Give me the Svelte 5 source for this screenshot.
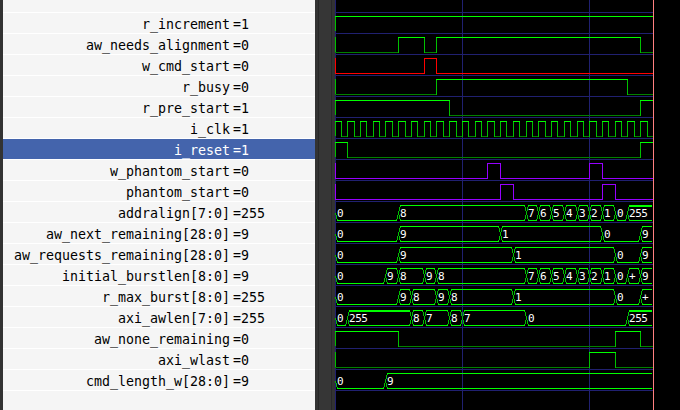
<script>
  const TICK = 12.738;
  const END = 25;
  const ROW = 21;
  const px = (t) => Math.floor(t * TICK);

  const clock = Array.from({ length: 50 }, (_, i) => [i / 2, i % 2 ? 0 : 1]);

  const signals = [
    { name: 'r_increment', value: '1', bits: [[0, 1]] },
    { name: 'aw_needs_alignment', value: '0', bits: [[0, 0], [5, 1], [7, 0], [8, 1], [24, 0]] },
    { name: 'w_cmd_start', value: '0', color: 'red', bits: [[0, 0], [7, 1], [8, 0]] },
    { name: 'r_busy', value: '0', bits: [[0, 0], [8, 1], [23, 0]] },
    { name: 'r_pre_start', value: '1', bits: [[0, 1], [9, 0], [24, 1]] },
    { name: 'i_clk', value: '1', bits: clock },
    { name: 'i_reset', value: '1', selected: true, bits: [[0, 1], [1, 0], [24, 1]] },
    { name: 'w_phantom_start', value: '0', color: 'violet', bits: [[0, 0], [12, 1], [13, 0], [20, 1], [21, 0]] },
    { name: 'phantom_start', value: '0', color: 'violet', bits: [[0, 0], [13, 1], [14, 0], [21, 1], [22, 0]] },
    { name: 'addralign[7:0]', value: '255', bus: [[0, '0'], [5, '8'], [15, '7'], [16, '6'], [17, '5'], [18, '4'], [19, '3'], [20, '2'], [21, '1'], [22, '0'], [23, '255']] },
    { name: 'aw_next_remaining[28:0]', value: '9', bus: [[0, '0'], [5, '9'], [13, '1'], [21, '0'], [24, '9']] },
    { name: 'aw_requests_remaining[28:0]', value: '9', bus: [[0, '0'], [5, '9'], [14, '1'], [22, '0'], [24, '9']] },
    { name: 'initial_burstlen[8:0]', value: '9', bus: [[0, '0'], [4, '9'], [5, '8'], [7, '9'], [8, '8'], [15, '7'], [16, '6'], [17, '5'], [18, '4'], [19, '3'], [20, '2'], [21, '1'], [22, '0'], [23, '+'], [24, '9']] },
    { name: 'r_max_burst[8:0]', value: '255', bus: [[0, '0'], [5, '9'], [6, '8'], [8, '9'], [9, '8'], [14, '1'], [22, '0'], [24, '+']] },
    { name: 'axi_awlen[7:0]', value: '255', bus: [[0, '0'], [1, '255'], [6, '8'], [7, '7'], [9, '8'], [10, '7'], [15, '0'], [23, '255']] },
    { name: 'aw_none_remaining', value: '0', bits: [[0, 1], [5, 0], [22, 1], [24, 0]] },
    { name: 'axi_wlast', value: '0', bits: [[0, 0], [20, 1], [22, 0]] },
    { name: 'cmd_length_w[28:0]', value: '9', bus: [[0, '0'], [4, '9']] }
  ];

  const box = (x, y, w, h) => `M${x} ${y}h${w}v${h}h${-w}z`;

  // One bit trace: high runs, low runs and the edges between them.
  function bitPaths(bits) {
    let high = '', low = '', edge = box(0, 4, 1, 15);
    bits.forEach(([t, v], i) => {
      const a = px(t);
      const b = px(bits[i + 1]?.[0] ?? END);
      if (i) edge += box(a, 4, 1, 16);
      if (v) high += box(a, 4, b - a + 1, 1);
      else low += box(a, 19, b - a + 1, 1);
    });
    return { high, low, edge };
  }

  // Stepped diagonal from the middle of the row to a corner.
  function slope(x, dir, up) {
    const steps = [[0, 2], [1, 4], [2, 2]];
    let d = '', n = 0;
    for (const [dx, h] of steps) {
      const y = up ? 12 - n - h : 12 + n;
      d += box(x + dir * dx, y, 1, h);
      n += h;
    }
    return d;
  }

  function busPaths(bus) {
    let line = '', edge = '';
    bus.forEach(([t, text], i) => {
      const a = px(t);
      const last = i === bus.length - 1;
      const b = px(last ? END : bus[i + 1][0]);
      const sides = text === '0' ? [false] : [true, false];
      for (const up of sides) {
        edge += slope(a, 1, up);
        if (!last) edge += slope(b, -1, up);
        const thick = up && text === '255' ? 2 : 1;
        line += box(a + 2, up ? 4 : 19, b - a - 3, thick);
      }
    });
    return { line, edge };
  }
</script>

<div class="viewer">
  <div class="names">
    <div class="head"></div>
    {#each signals as s}
      <div class="row" class:selected={s.selected}>
        <span class="name">{s.name}</span><span class="value">={s.value}</span>
      </div>
    {/each}
    <div class="tail"></div>
  </div>
  <div class="splitter"></div>
  <svg class="waves" width="345" height="410" viewBox="0 0 345 410">
    <g class="grid">
      {#each [0, 10, 20] as t}
        <rect x={px(t)} y="0" width="1" height="410" />
      {/each}
      {#each Array(signals.length + 1) as _, i}
        <rect x="0" y={12 + i * ROW} width={px(END)} height="1" />
      {/each}
    </g>
    {#each signals as s, i}
      <g class={s.color ?? 'green'} transform={`translate(0 ${12 + i * ROW})`}>
        {#if s.bits}
          {@const p = bitPaths(s.bits)}
          <path class="low" d={p.low} />
          <path class="edge" d={p.edge} />
          <path class="high" d={p.high} />
        {:else}
          {@const p = busPaths(s.bus)}
          <path class="edge" d={p.edge} />
          <path class="high" d={p.line} />
          {#each s.bus as [t, text]}
            <text x={px(t) + 2} y="16">{text}</text>
          {/each}
        {/if}
      </g>
    {/each}
    <rect class="cursor" x={px(END)} y="0" width="1" height="410" />
  </svg>
</div>

<style>
  :global(body) { background: #000; overflow: hidden; }
  .viewer {
    display: flex;
    width: 680px;
    height: 410px;
    overflow: hidden;
    background: #333;
  }
  .names {
    flex: none;
    width: 312px;
    margin-left: 3px;
    background: #fff;
    color: #000;
    font: 13.29px/24px "DejaVu Sans Mono", monospace;
  }
  .head { height: 12px; background: #f5f5f5; }
  .row {
    display: flex;
    height: 20px;
    margin-top: 1px;
    background: #f5f5f5;
    white-space: pre;
  }
  .selected { background: #4464ac; color: #fff; }
  .name { width: 227px; display: flex; justify-content: flex-end; }
  .value { margin-left: 3px; }
  .tail { height: 30px; margin-top: 1px; background: #f5f5f5; }
  .splitter {
    flex: none;
    width: 20px;
    background: linear-gradient(90deg, #333 3px, #282828 3px 4px, #363636 4px 16px, #282828 16px 17px, #333 17px);
  }
  .waves {
    flex: none;
    display: block;
    background: #000;
    shape-rendering: crispEdges;
  }
  .grid { fill: #202070; }
  .green .high { fill: #00ff00; }
  .green .low { fill: #008000; }
  .green .edge { fill: #00c000; }
  .red path { fill: #ff0000; }
  .violet path { fill: #9600ff; }
  .cursor { fill: #ff8080; }
  text {
    fill: #fff;
    font: 11px "DejaVu Sans Mono", monospace;
    letter-spacing: -0.45px;
  }
</style>
